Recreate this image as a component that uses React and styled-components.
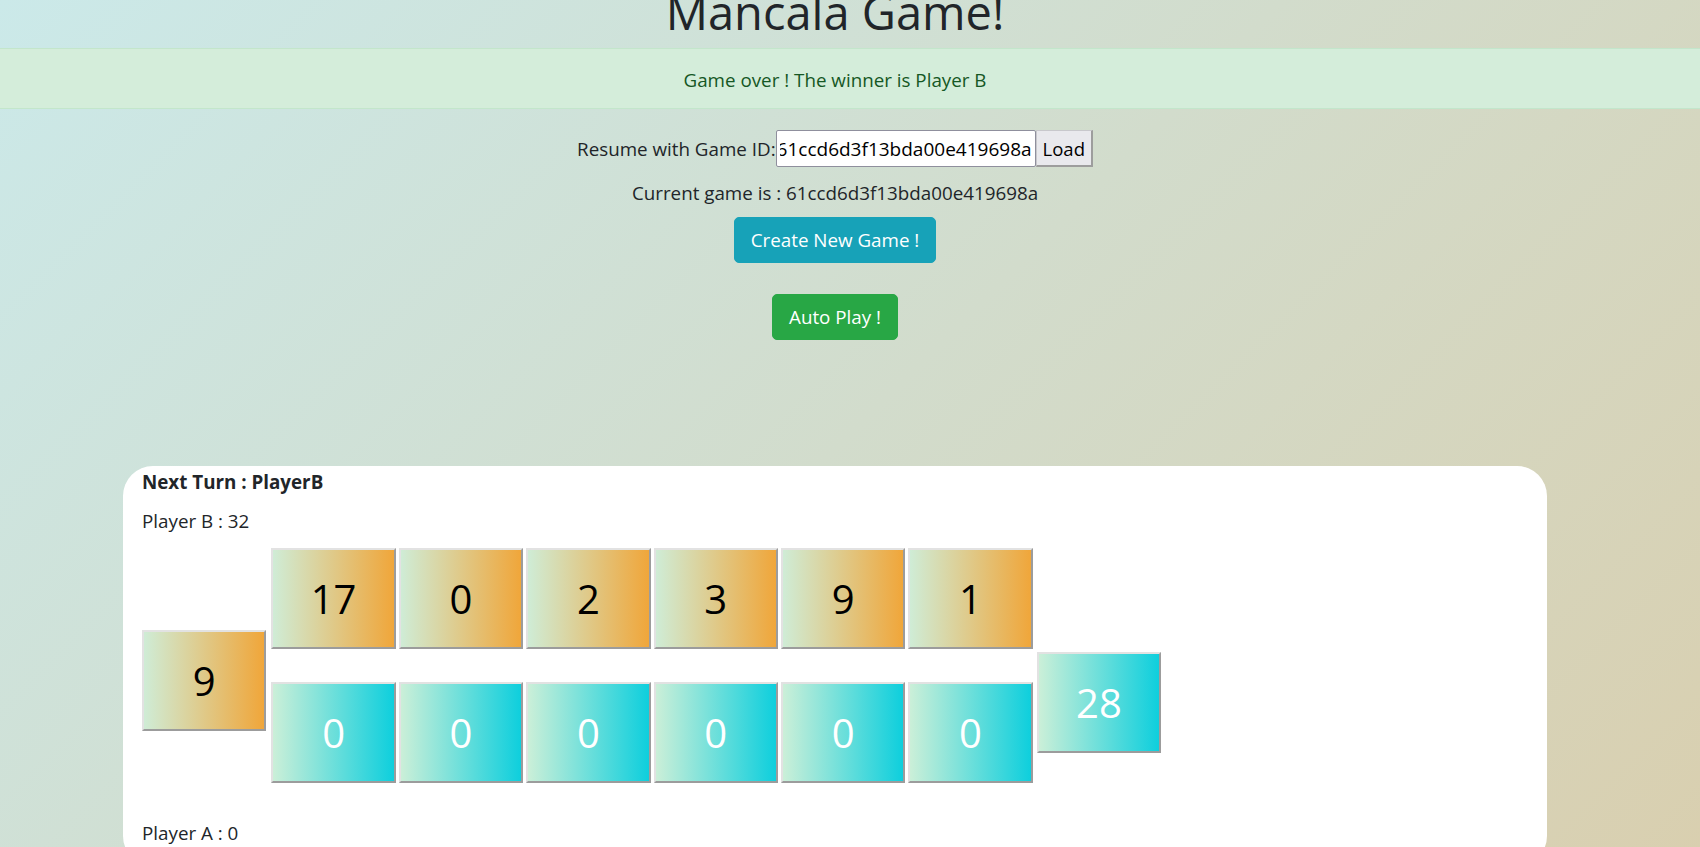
import React from "react";
import styled, { createGlobalStyle } from "styled-components";

const GlobalStyle = createGlobalStyle`
  html, body {
    margin: 0;
    padding: 0;
  }
  body {
    min-height: 100vh;
    background: linear-gradient(135deg, #cbe9e9 0%, #d9cfaf 100%);
    font-family: "Open Sans", "Noto Sans", sans-serif;
    color: #212529;
    font-size: 18.8px;
    line-height: 26px;
    overflow: hidden;
  }
`;

const Page = styled.div`
  padding-right: 30px;
  display: flex;
  flex-direction: column;
  align-items: center;
  text-align: center;
`;

const Title = styled.h1`
  margin: -18px 0 6px;
  font-size: 47px;
  line-height: 60px;
  font-weight: 400;
  color: #212529;
`;

const Alert = styled.div`
  align-self: stretch;
  margin-right: -30px;
  padding: 19px 30px 15px 0;
  background: #d4edda;
  border-top: 1px solid #c3e6cb;
  border-bottom: 1px solid #c3e6cb;
  color: #155724;
  line-height: 25px;
`;

const ResumeRow = styled.div`
  margin-top: 21px;
  display: flex;
  align-items: center;
  height: 37px;
`;

const IdInput = styled.input`
  box-sizing: border-box;
  width: 260px;
  height: 37px;
  margin: 0;
  padding: 1px 3px;
  border: 1px solid #8f8f9d;
  border-radius: 2px;
  background: #fff;
  font-family: "Open Sans", "Noto Sans", sans-serif;
  font-size: 19px;
  color: #000;
  direction: rtl;
  outline: none;
`;

const LoadButton = styled.button`
  box-sizing: border-box;
  height: 37px;
  margin: 0;
  padding: 0 6px;
  border: 1px solid #c8c8cc;
  border-right: 2px solid #9d9d9d;
  border-bottom: 2px solid #9d9d9d;
  background: #e9e9ed;
  font-family: "Open Sans", "Noto Sans", sans-serif;
  font-size: 18.5px;
  color: #000;
`;

const InfoLine = styled.div`
  margin-top: 13px;
`;

const ActionButton = styled.button`
  margin-top: ${(p) => p.$top}px;
  height: 46px;
  padding: 0 16px;
  border: 1px solid ${(p) => p.$bg};
  border-radius: 5px;
  background: ${(p) => p.$bg};
  color: #fff;
  font-family: "Open Sans", "Noto Sans", sans-serif;
  font-size: 18.8px;
`;

const Card = styled.section`
  align-self: stretch;
  margin: 126px 123px 0;
  padding: 3px 19px 20px;
  background: #fff;
  border-radius: 30px;
  text-align: left;
`;

const TurnLabel = styled.div`
  font-weight: 700;
`;

const PlayerLabel = styled.div`
  margin-top: ${(p) => p.$top}px;
`;

const Board = styled.div`
  margin-top: 14px;
  display: flex;
  align-items: flex-start;
`;

const PitGrid = styled.div`
  margin: 0 4px 0 5px;
  display: grid;
  grid-template-columns: repeat(6, 124.4px);
  grid-auto-rows: 101px;
  column-gap: 3px;
  row-gap: 33px;
`;

const Pit = styled.div`
  box-sizing: border-box;
  width: 124.4px;
  height: 101px;
  margin-top: ${(p) => p.$top || 0}px;
  display: flex;
  align-items: center;
  justify-content: center;
  border-top: 2px solid #e2e2e2;
  border-left: 2px solid #e2e2e2;
  border-right: 2px solid #9c9c9c;
  border-bottom: 2px solid #9c9c9c;
  background: ${(p) =>
    p.$side === "B"
      ? "linear-gradient(to right, #cfecd6, #f0a63a)"
      : "linear-gradient(to right, #cbefd8, #0ecfdd)"};
  color: ${(p) => (p.$side === "B" ? "#000" : "#fff")};
  font-size: 40px;
  line-height: 1;
`;

const topRow = [17, 0, 2, 3, 9, 1];
const bottomRow = [0, 0, 0, 0, 0, 0];

export default function App() {
  return (
    <>
      <GlobalStyle />
      <Page>
        <Title>Mancala Game!</Title>
        <Alert>Game over ! The winner is Player B</Alert>
        <ResumeRow>
          <span>Resume with Game ID:</span>
          <IdInput readOnly value="61ccd6d3f13bda00e419698a" />
          <LoadButton>Load</LoadButton>
        </ResumeRow>
        <InfoLine>Current game is : 61ccd6d3f13bda00e419698a</InfoLine>
        <ActionButton $top={11} $bg="#17a2b8">Create New Game !</ActionButton>
        <ActionButton $top={31} $bg="#28a745">Auto Play !</ActionButton>
        <Card>
          <TurnLabel>Next Turn : PlayerB</TurnLabel>
          <PlayerLabel $top={13}>Player B : 32</PlayerLabel>
          <Board>
            <Pit $side="B" $top={82}>9</Pit>
            <PitGrid>
              {topRow.map((v, i) => (
                <Pit key={"t" + i} $side="B">{v}</Pit>
              ))}
              {bottomRow.map((v, i) => (
                <Pit key={"b" + i} $side="A">{v}</Pit>
              ))}
            </PitGrid>
            <Pit $side="A" $top={104}>28</Pit>
          </Board>
          <PlayerLabel $top={37}>Player A : 0</PlayerLabel>
        </Card>
      </Page>
    </>
  );
}
